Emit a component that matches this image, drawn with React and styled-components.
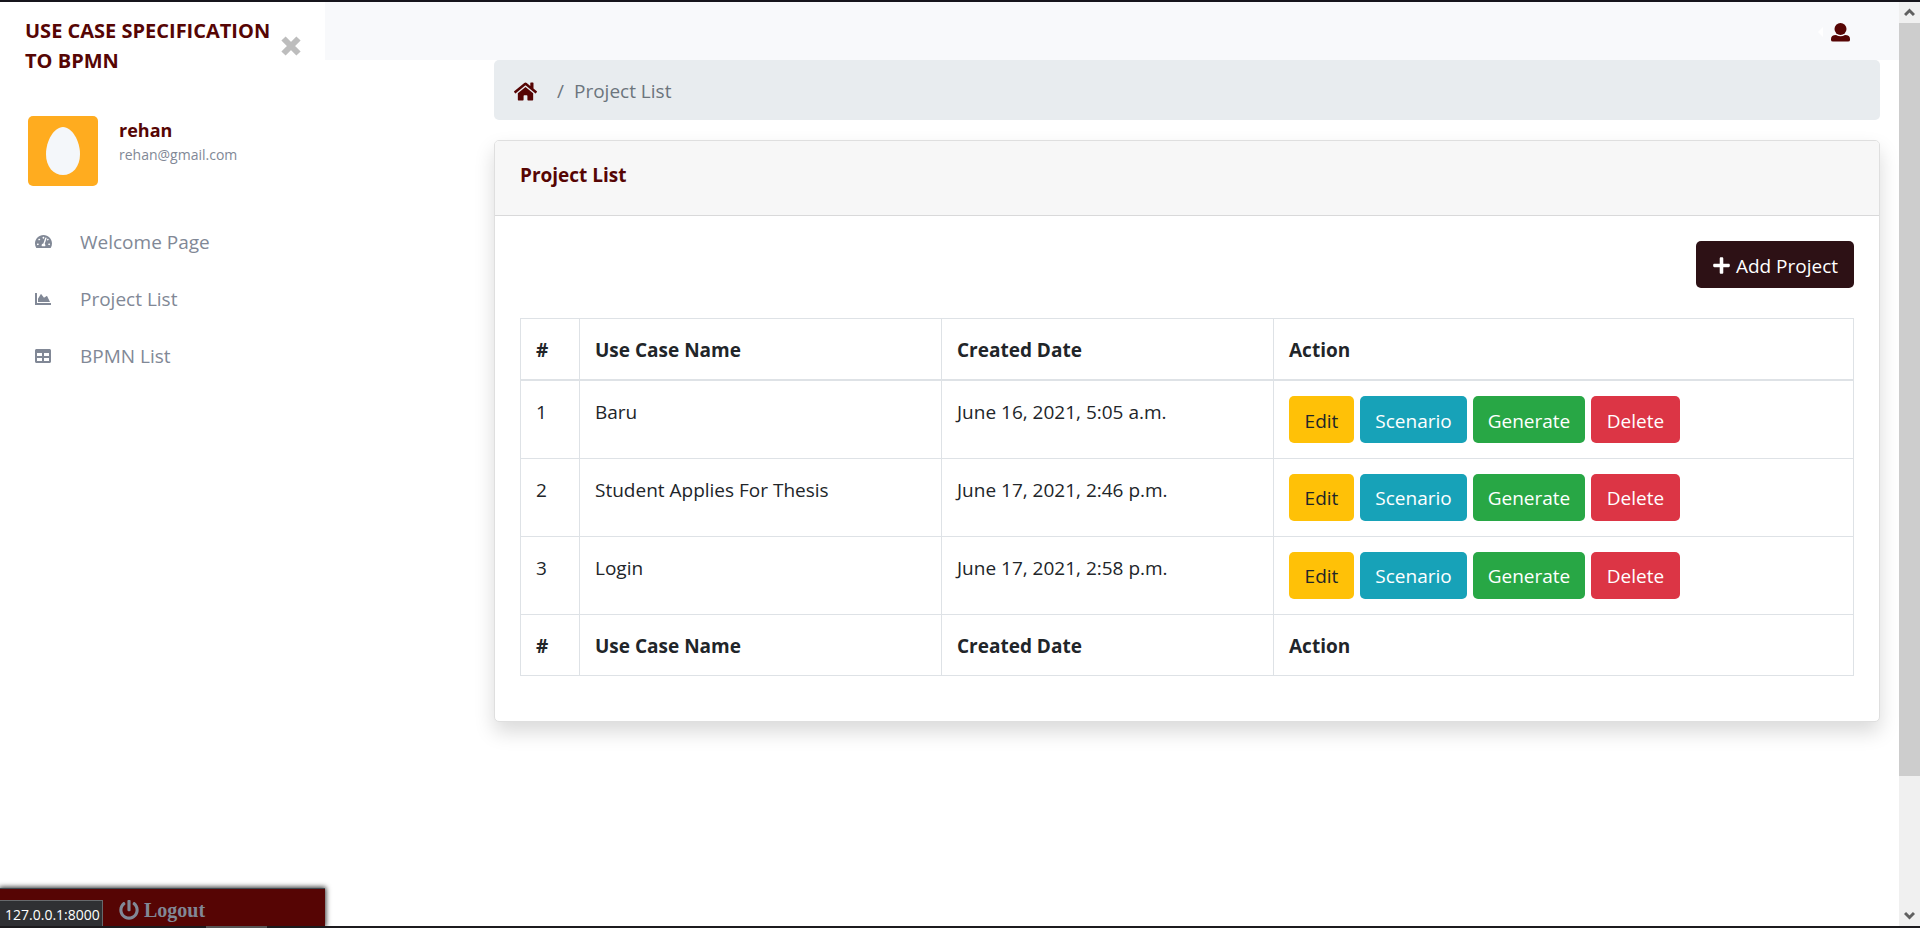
import React from "react";
import styled, { createGlobalStyle } from "styled-components";
import { FaTachometerAlt, FaChartArea, FaTable, FaHome, FaPlus, FaPowerOff } from "react-icons/fa";

const GlobalStyle = createGlobalStyle`
  *, *::before, *::after { box-sizing: border-box; }
  body {
    margin: 0;
    background: #fff;
    color: #212529;
    font-family: "Open Sans", "Noto Sans", sans-serif;
    font-size: 19px;
    line-height: 30px;
  }
  a { color: inherit; text-decoration: none; }
`;

const Screen = styled.div`
  display: flex;
  flex-direction: column;
  min-height: 100vh;
`;

const Window = styled.div`
  flex: 1;
  display: flex;
  border-top: 2px solid #16151c;
`;

const Taskbar = styled.div`
  height: 2px;
  padding-left: 206px;
  background: #1c1b1e;
`;

const TaskbarTab = styled.div`
  width: 61px;
  height: 2px;
  background: #555;
`;

const Sidebar = styled.aside`
  flex: 0 0 325px;
  display: flex;
  flex-direction: column;
`;

const Brand = styled.div`
  display: flex;
  align-items: flex-start;
  justify-content: space-between;
  padding: 14px 24px 0 25px;
  color: #560504;
  font-size: 20px;
  font-weight: 700;
`;

const BrandName = styled.a`
  flex: 0 0 250px;
  white-space: nowrap;
`;

const CloseButton = styled.button`
  margin-top: 20px;
  padding: 0;
  border: 0;
  background: none;
  color: #bdbdbd;
  line-height: 0;
`;

const Profile = styled.div`
  display: flex;
  gap: 21px;
  padding: 40px 28px 0;
`;

const Avatar = styled.svg`
  width: 70px;
  height: 70px;
  border-radius: 5px;
`;

const UserName = styled.div`
  color: #560504;
  font-size: 18px;
  font-weight: 700;
  line-height: 28px;
`;

const UserMail = styled.div`
  color: #818896;
  font-size: 14px;
  line-height: 22px;
`;

const Menu = styled.nav`
  display: flex;
  flex-direction: column;
  margin-top: 27px;
`;

const MenuLink = styled.a`
  display: grid;
  grid-template-columns: 17px 1fr;
  align-items: center;
  column-gap: 28px;
  height: 57px;
  padding: 0 35px;
  color: #818896;
`;

const LogoutBar = styled.div`
  display: flex;
  align-items: flex-end;
  height: 38px;
  margin-top: auto;
  background: #560504;
  border-top: 1px solid #3f4a50;
  box-shadow: 0 0 5px 1px #333;
  color: #818896;
`;

const StatusText = styled.div`
  flex: 0 0 103px;
  height: 26px;
  padding-left: 5px;
  border: 1px solid #66696c;
  border-width: 1px 1px 0 0;
  background: #2f3033;
  color: #fff;
  font-size: 14px;
  line-height: 27px;
`;

const LogoutLink = styled.a`
  display: flex;
  align-items: center;
  gap: 5px;
  padding-left: 16px;
  font: 700 20px/32px "Liberation Serif", serif;
`;

const Page = styled.div`
  flex: 1;
  min-width: 0;
`;

const TopBar = styled.header`
  display: flex;
  align-items: center;
  justify-content: flex-end;
  gap: 8px;
  height: 58px;
  padding: 2px 49px 0 0;
  background: #f8f9fb;
`;

const Caret = styled.span`
  border: 5px solid transparent;
  border-left: 0;
  border-right-color: #fff;
`;

const UserButton = styled.button`
  padding: 0;
  border: 0;
  background: none;
  color: #560504;
  line-height: 0;
`;

const Main = styled.main`
  margin: 0 19px 0 169px;
`;

const Breadcrumb = styled.nav`
  display: flex;
  align-items: center;
  height: 60px;
  padding: 2px 20px 0;
  border-radius: 5px;
  background: #e8ecef;
  color: #6c757d;
`;

const HomeLink = styled.a`
  margin-right: 20px;
  color: #560504;
  line-height: 0;
`;

const Separator = styled.span`
  margin-right: 10px;
`;

const Card = styled.section`
  margin-top: 20px;
  border: 1px solid #dfdfdf;
  border-radius: 5px;
  background: #fff;
  box-shadow: 0 10px 20px rgba(0, 0, 0, 0.15);
`;

const CardTitle = styled.h2`
  height: 75px;
  margin: 0;
  padding: 18px 25px 0;
  border-bottom: 1px solid #d9d9da;
  border-radius: 4px 4px 0 0;
  background: #f7f7f7;
  color: #560504;
  font-size: 19px;
  line-height: 32px;
`;

const CardBody = styled.div`
  padding: 25px 25px 45px;
`;

const Toolbar = styled.div`
  display: flex;
  justify-content: flex-end;
  margin-bottom: 30px;
`;

const tones = {
  dark: ["#2d1115", "#fff", 158],
  warning: ["#ffc107", "#212529", 65],
  info: ["#17a2b8", "#fff", 107],
  success: ["#28a745", "#fff", 112],
  danger: ["#dc3545", "#fff", 89],
};

const Button = styled.button`
  display: inline-flex;
  align-items: center;
  justify-content: center;
  gap: 5px;
  width: ${(p) => tones[p.$tone][2]}px;
  height: 47px;
  padding: 2px 0 0;
  border: 0;
  border-radius: 5px;
  background: ${(p) => tones[p.$tone][0]};
  color: ${(p) => tones[p.$tone][1]};
  font: inherit;
  white-space: nowrap;
`;

const Table = styled.table`
  width: 100%;
  table-layout: fixed;
  border-collapse: collapse;

  th, td {
    height: 78px;
    padding: 16px 15px 14px;
    border: 1px solid #dee2e6;
    text-align: left;
    vertical-align: top;
  }
  th { height: 61px; }
  td:last-child { padding-top: 15px; }
  thead th { border-bottom-width: 2px; }
`;

const Column = styled.col`
  width: ${(p) => p.$width};
`;

const Actions = styled.div`
  display: flex;
  gap: 6px;
`;

const ScrollTrack = styled.div`
  flex: 0 0 21px;
  display: grid;
  grid-template-rows: 21px 753fr 129fr 21px;
  justify-items: center;
  align-items: center;
  background: #f0f0f0;
`;

const ScrollThumb = styled.div`
  align-self: stretch;
  justify-self: stretch;
  background: #cdcdcd;
`;

const ScrollArrow = styled.svg`
  grid-row: ${(p) => p.$row};
  width: 11px;
  height: 9px;
  fill: none;
  stroke: #606060;
  stroke-width: 3;
`;

const headings = ["#", "Use Case Name", "Created Date", "Action"];

const projects = [
  ["1", "Baru", "June 16, 2021, 5:05 a.m."],
  ["2", "Student Applies For Thesis", "June 17, 2021, 2:46 p.m."],
  ["3", "Login", "June 17, 2021, 2:58 p.m."],
];

const HeadingRow = () => (
  <tr>{headings.map((h) => <th key={h} scope="col">{h}</th>)}</tr>
);

export default function App() {
  return (
    <Screen>
      <GlobalStyle />
      <Window>
        <Sidebar>
          <Brand>
            <BrandName href="#">USE CASE SPECIFICATION<br />TO BPMN</BrandName>
            <CloseButton aria-label="Close menu">
              <svg width="20" height="20" viewBox="0 0 20 20" stroke="currentColor" strokeWidth="6">
                <path d="M2.5 2.5 17.5 17.5M17.5 2.5 2.5 17.5" />
              </svg>
            </CloseButton>
          </Brand>
          <Profile>
            <Avatar viewBox="0 0 70 70" aria-label="Avatar">
              <rect width="70" height="70" fill="#ffac1f" />
              <path d="M35 11C44 11 52 25 52 38C52 51 44.500 59 35 59S18 51 18 38C18 25 26 11 35 11Z" fill="#f4f7fa" />
            </Avatar>
            <div>
              <UserName>rehan</UserName>
              <UserMail>rehan@gmail.com</UserMail>
            </div>
          </Profile>
          <Menu>
            <MenuLink href="#"><FaTachometerAlt size={17} />Welcome Page</MenuLink>
            <MenuLink href="#"><FaChartArea size={16} />Project List</MenuLink>
            <MenuLink href="#"><FaTable size={16} />BPMN List</MenuLink>
          </Menu>
          <LogoutBar>
            <StatusText>127.0.0.1:8000</StatusText>
            <LogoutLink href="#"><FaPowerOff size={20} />Logout</LogoutLink>
          </LogoutBar>
        </Sidebar>
        <Page>
          <TopBar>
            <Caret />
            <UserButton aria-label="Account">
              <svg width="19" height="19" viewBox="0 0 19 19" fill="currentColor">
                <circle cx="9.500" cy="6" r="6" />
                <path d="M5 12Q9.500 14.500 14 12Q19 12 19 16V17Q19 18.500 17 18.500H2Q0 18.500 0 17V16Q0 12 5 12Z" />
              </svg>
            </UserButton>
          </TopBar>
          <Main>
            <Breadcrumb aria-label="Breadcrumb">
              <HomeLink href="#" aria-label="Home"><FaHome size={23} /></HomeLink>
              <Separator>/</Separator>
              <span>Project List</span>
            </Breadcrumb>
            <Card>
              <CardTitle>Project List</CardTitle>
              <CardBody>
                <Toolbar>
                  <Button $tone="dark"><FaPlus size={19} />Add Project</Button>
                </Toolbar>
                <Table>
                  <colgroup>
                    <Column $width="59px" />
                    <Column $width="362px" />
                    <Column $width="332px" />
                    <Column $width="auto" />
                  </colgroup>
                  <thead><HeadingRow /></thead>
                  <tbody>
                    {projects.map(([id, name, date]) => (
                      <tr key={id}>
                        <td>{id}</td>
                        <td>{name}</td>
                        <td>{date}</td>
                        <td>
                          <Actions>
                            <Button $tone="warning">Edit</Button>
                            <Button $tone="info">Scenario</Button>
                            <Button $tone="success">Generate</Button>
                            <Button $tone="danger">Delete</Button>
                          </Actions>
                        </td>
                      </tr>
                    ))}
                  </tbody>
                  <tfoot><HeadingRow /></tfoot>
                </Table>
              </CardBody>
            </Card>
          </Main>
        </Page>
        <ScrollTrack aria-hidden="true">
          <ScrollArrow $row={1} viewBox="0 0 11 9"><path d="M1 7 5.500 2.500 10 7" /></ScrollArrow>
          <ScrollThumb />
          <ScrollArrow $row={4} viewBox="0 0 11 9"><path d="M1 2 5.500 6.500 10 2" /></ScrollArrow>
        </ScrollTrack>
      </Window>
      <Taskbar><TaskbarTab /></Taskbar>
    </Screen>
  );
}
